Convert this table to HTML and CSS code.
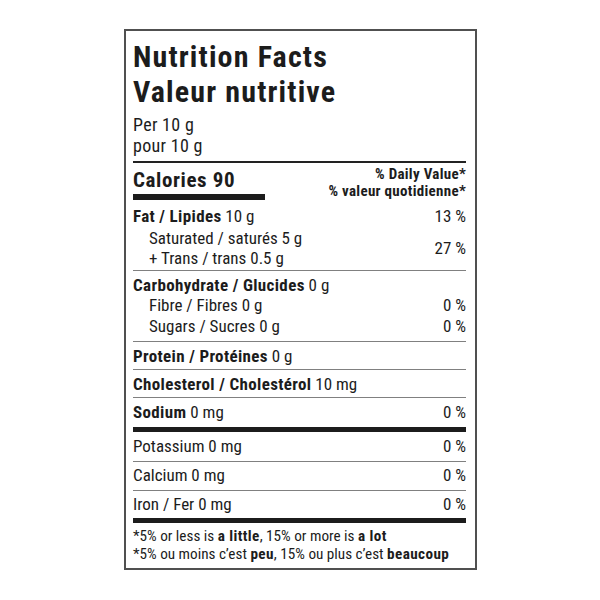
FILE: index.html
```html
<!DOCTYPE html>
<html>
<head>
<meta charset="utf-8">
<link rel="stylesheet" href="styles.css">
</head>
<body>
<div class="label">
  <div class="title first-title">Nutrition Facts</div>
  <div class="title">Valeur nutritive</div>
  <div class="serving first-serving">Per 10 g</div>
  <div class="serving">pour 10 g</div>
  <div class="head">
    <div class="cal-wrap">
      <div class="cal">Calories 90</div>
      <div class="cal-bar"></div>
    </div>
    <div class="dv">
      <div>% Daily Value*</div>
      <div>% valeur quotidienne*</div>
    </div>
  </div>
  <div class="group first">
    <div class="row"><span><b>Fat / Lipides</b> 10 g</span><span>13 %</span></div>
    <div class="row sub-pair">
      <div class="subs">
        <div>Saturated / saturés 5 g</div>
        <div>+ Trans / trans 0.5 g</div>
      </div>
      <span>27 %</span>
    </div>
  </div>
  <div class="group carb">
    <div class="row"><span><b>Carbohydrate / Glucides</b> 0 g</span><span></span></div>
    <div class="row sub"><span>Fibre / Fibres 0 g</span><span>0 %</span></div>
    <div class="row sub"><span>Sugars / Sucres 0 g</span><span>0 %</span></div>
  </div>
  <div class="group">
    <div class="row"><span><b>Protein / Protéines</b> 0 g</span><span></span></div>
  </div>
  <div class="group">
    <div class="row"><span><b>Cholesterol / Cholestérol</b> 10 mg</span><span></span></div>
  </div>
  <div class="group sodium">
    <div class="row"><span><b>Sodium</b> 0 mg</span><span>0 %</span></div>
  </div>
  <div class="group thick">
    <div class="row"><span>Potassium 0 mg</span><span>0 %</span></div>
  </div>
  <div class="group calcium">
    <div class="row"><span>Calcium 0 mg</span><span>0 %</span></div>
  </div>
  <div class="group calcium iron">
    <div class="row"><span>Iron / Fer 0 mg</span><span>0 %</span></div>
  </div>
  <div class="foot">
    <div>*5% or less is <b>a little</b>, 15% or more is <b>a lot</b></div>
    <div>*5% ou moins c’est <b>peu</b>, 15% ou plus c’est <b>beaucoup</b></div>
  </div>
</div>
</body>
</html>
```

FILE: styles.css
```css
html, body {
  margin: 0;
  padding: 0;
  background: #fff;
}
body {
  font-family: "Liberation Sans Narrow", "Arial Narrow", "Roboto Condensed", "DejaVu Sans Condensed", "Liberation Sans", sans-serif;
  color: #1c1c1c;
}
.label {
  box-sizing: border-box;
  width: 353px;
  margin: 29px 0 0 124px;
  border: 2px solid #505050;
  padding: 8px 9px 5px 7px;
}
.title {
  font-weight: bold;
  font-size: 30px;
  line-height: 35px;
  letter-spacing: 1.15px;
}
.serving {
  font-size: 18px;
  line-height: 21px;
  letter-spacing: 0.3px;
}
.first-serving {
  margin-top: 5px;
}
.head {
  margin-top: 5px;
  border-top: 2px solid #222;
  display: flex;
  justify-content: space-between;
  padding-top: 5px;
}
.cal {
  font-weight: bold;
  font-size: 21px;
  line-height: 24px;
  letter-spacing: 0.6px;
}
.cal-bar {
  width: 132px;
  height: 6px;
  background: #1c1c1c;
  margin-top: 2px;
}
.dv {
  margin-top: -2px;
  font-weight: bold;
  font-size: 15px;
  line-height: 17px;
  letter-spacing: 0.3px;
  text-align: right;
}
.group {
  border-top: 1px solid #808080;
  padding: 4px 0 3px;
}
.group.first {
  border-top: none;
  padding: 6px 0 2px;
}
.group.carb {
  padding-bottom: 4px;
}
.group.sodium {
  padding-bottom: 5px;
}
.group.thick {
  border-top: 5px solid #1c1c1c;
  padding-bottom: 5px;
}
.group.calcium {
  padding: 3px 0 5px;
}
.group.iron {
  padding-bottom: 4px;
}
.row {
  display: flex;
  justify-content: space-between;
  align-items: center;
  font-size: 17px;
  line-height: 20px;
}
.row b {
  letter-spacing: 0.35px;
}
.sub {
  line-height: 21px;
  padding-left: 16px;
}
.sub-pair {
  margin-top: 2px;
}
.subs {
  padding-left: 16px;
}
.foot {
  border-top: 5px solid #1c1c1c;
  padding-top: 4px;
  font-size: 15.2px;
  line-height: 18px;
}
.foot b {
  letter-spacing: 0.4px;
}
```
